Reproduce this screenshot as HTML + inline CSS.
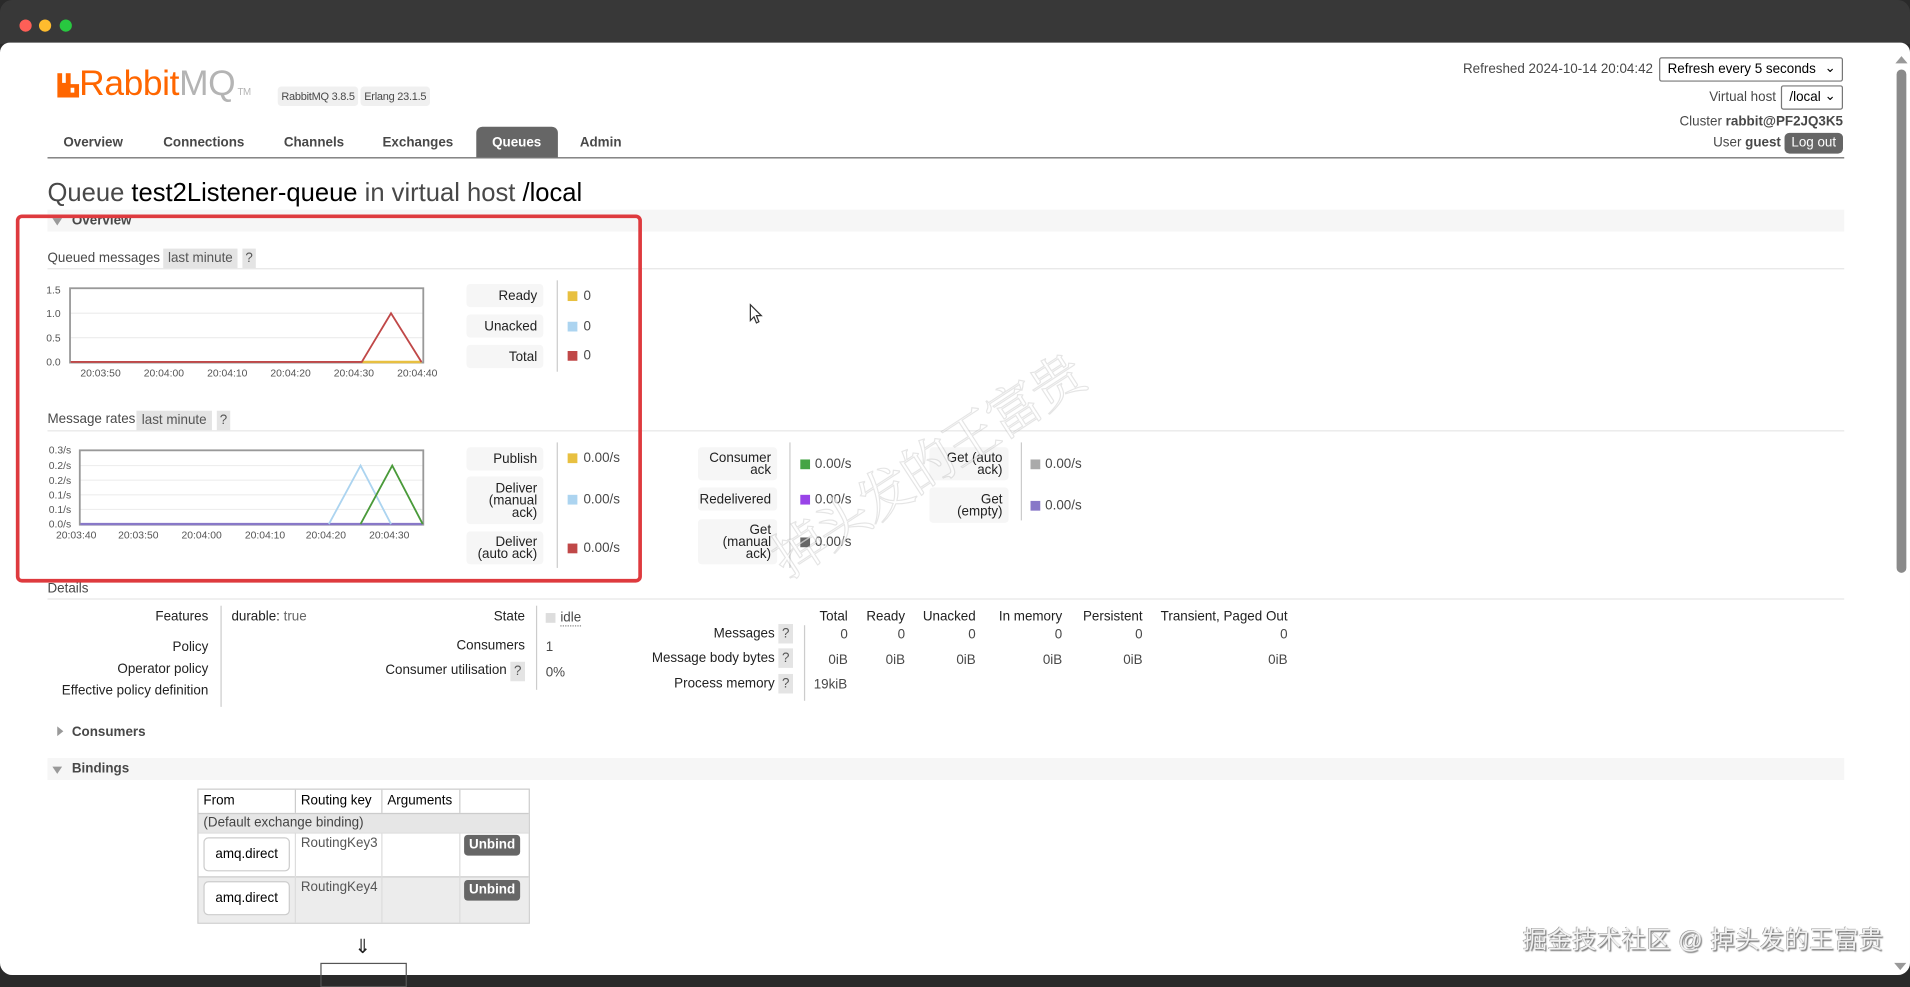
<!DOCTYPE html>
<html><head><meta charset="utf-8"><style>
*{margin:0;padding:0;box-sizing:border-box}
html,body{width:1910px;height:975px;overflow:hidden;background:#2a2a2a}
#w{position:absolute;left:0;top:0;width:1568px;height:800px;transform:scale(1.21811,1.21875);transform-origin:0 0;font-family:"Liberation Sans","Noto Sans CJK SC",sans-serif;font-size:11px;color:#484848}
.a{position:absolute;white-space:nowrap}
.r{text-align:right}
.b{font-weight:bold}
.lb{position:absolute;background:#f6f6f6;border-radius:3px;text-align:right;padding-right:5px;color:#222;line-height:10px;display:flex;flex-direction:column;justify-content:center;align-items:flex-end}
.sw{position:absolute;width:8px;height:8px}
.vl{position:absolute;width:1px;background:#ccc}
.hl{position:absolute;height:1px;background:#e6e6e6}
.q{position:absolute;background:#e4e4e4;color:#555;text-align:center;line-height:16px;height:16px}
.ax{position:absolute;font-size:8.5px;color:#555;white-space:nowrap}
</style></head><body><div id="w">
<div class="a" style="left:0;top:0;width:1568px;height:36px;background:#383838;border-radius:10px 10px 0 0"></div>
<div class="a" style="left:16px;top:16px;width:10px;height:10px;border-radius:50%;background:#fe5f57"></div>
<div class="a" style="left:32px;top:16px;width:10px;height:10px;border-radius:50%;background:#febc2e"></div>
<div class="a" style="left:49px;top:16px;width:10px;height:10px;border-radius:50%;background:#28c840"></div>
<div class="a" style="left:0;top:35px;width:1568px;height:765px;background:#fff;border-radius:8px 8px 10px 10px"></div>

<svg class="a" style="left:47px;top:60px" width="18" height="20" viewBox="0 0 18 20"><path d="M0 0h4v8h3V0h4v9h7v11H0z M11 12v4h3v-4z" fill="#f60" fill-rule="evenodd"/></svg>
<div class="a" style="left:65px;top:53px;font-size:29px;color:#f60;letter-spacing:-0.3px">Rabbit<span style="color:#b4b4b4">MQ</span><span style="font-size:8px;color:#b4b4b4"> TM</span></div>
<div class="a" style="left:228px;top:71px;height:16px;line-height:16px;padding:0 3px;background:#f0f0f0;border-radius:3px;font-size:9px;letter-spacing:-0.2px">RabbitMQ 3.8.5</div>
<div class="a" style="left:296px;top:71px;height:16px;line-height:16px;padding:0 3px;background:#f0f0f0;border-radius:3px;font-size:9px;letter-spacing:-0.2px">Erlang 23.1.5</div>

<div class="a b" style="left:52px;top:111px">Overview</div>
<div class="a b" style="left:134px;top:111px">Connections</div>
<div class="a b" style="left:233px;top:111px">Channels</div>
<div class="a b" style="left:314px;top:111px">Exchanges</div>
<div class="a" style="left:391px;top:104px;width:67px;height:25px;background:#666;border-radius:5px 5px 0 0"></div>
<div class="a b" style="left:404px;top:111px;color:#fff">Queues</div>
<div class="a b" style="left:476px;top:111px">Admin</div>
<div class="a" style="left:39px;top:129px;width:1475px;height:1px;background:#666"></div>

<div class="a r" style="right:211px;top:51px">Refreshed 2024-10-14 20:04:42</div>
<div class="a" style="left:1362px;top:47px;width:151px;height:20px;border:1px solid #777;border-radius:2px;color:#000;padding:3px 0 0 6px">Refresh every 5 seconds<span style="position:absolute;right:5px;top:1px">&#8964;</span></div>
<div class="a r" style="right:110px;top:74px">Virtual host</div>
<div class="a" style="left:1462px;top:70px;width:51px;height:20px;border:1px solid #777;border-radius:2px;color:#000;padding:3px 0 0 6px">/local<span style="position:absolute;right:5px;top:1px">&#8964;</span></div>
<div class="a r" style="right:55px;top:94px">Cluster <b>rabbit@PF2JQ3K5</b></div>
<div class="a r" style="right:106px;top:111px">User <b>guest</b></div>
<div class="a" style="left:1465px;top:109px;width:48px;height:17px;background:#666;color:#fff;border-radius:4px;text-align:center;line-height:17px">Log out</div>

<div class="a" style="left:1556px;top:46px;border:5px solid transparent;border-bottom:6px solid #999;border-top:0"></div>
<div class="a" style="left:1557px;top:57px;width:8px;height:413px;background:#8a8a8a;border-radius:4px"></div>

<div class="a" style="left:39px;top:147px;font-size:21px;color:#484848">Queue <span style="color:#000">test2Listener-queue</span> in virtual host <span style="color:#000">/local</span></div>

<div class="a" style="left:39px;top:172px;width:1475px;height:18px;background:#f6f6f6"></div>
<div class="a" style="left:43px;top:179px;border:4px solid transparent;border-top:6px solid #999;border-bottom:0"></div>
<div class="a b" style="left:59px;top:175px">Overview</div>

<div class="a" style="left:39px;top:206px">Queued messages</div>
<div class="q" style="left:134px;top:204px;width:61px">last minute</div>
<div class="q" style="left:199px;top:204px;width:11px">?</div>
<div class="hl" style="left:39px;top:220px;width:1475px"></div>

<svg class="a" style="left:0;top:225px" width="380" height="95">
<g stroke="#eee" stroke-width="1"><line x1="57" y1="32" x2="348" y2="32"/><line x1="57" y1="52" x2="348" y2="52"/></g>
<rect x="57.5" y="11.5" width="290" height="61" fill="none" stroke="#999" stroke-width="1.5"/>
<polyline points="297,72 346,72" stroke="#e8c040" stroke-width="2" fill="none"/>
<polyline points="58,72 297,72 321,32 346,72" stroke="#c04848" stroke-width="1.5" fill="none"/>
</svg>
<div class="ax" style="left:38px;top:233px">1.5</div><div class="ax" style="left:38px;top:252px">1.0</div><div class="ax" style="left:38px;top:272px">0.5</div><div class="ax" style="left:38px;top:292px">0.0</div>
<div class="ax" style="left:66px;top:301px">20:03:50</div><div class="ax" style="left:118px;top:301px">20:04:00</div><div class="ax" style="left:170px;top:301px">20:04:10</div><div class="ax" style="left:222px;top:301px">20:04:20</div><div class="ax" style="left:274px;top:301px">20:04:30</div><div class="ax" style="left:326px;top:301px">20:04:40</div>

<div class="lb" style="left:383px;top:233px;width:63px;height:19px">Ready</div>
<div class="lb" style="left:383px;top:258px;width:63px;height:19px">Unacked</div>
<div class="lb" style="left:383px;top:283px;width:63px;height:19px">Total</div>
<div class="vl" style="left:457px;top:230px;height:75px"></div>
<div class="sw" style="left:466px;top:239px;background:#e8c040"></div><div class="a" style="left:479px;top:237px">0</div>
<div class="sw" style="left:466px;top:264px;background:#acd4f0"></div><div class="a" style="left:479px;top:262px">0</div>
<div class="sw" style="left:466px;top:288px;background:#c04848"></div><div class="a" style="left:479px;top:286px">0</div>

<div class="a" style="left:39px;top:338px">Message rates</div>
<div class="q" style="left:112px;top:337px;width:62px">last minute</div>
<div class="q" style="left:178px;top:337px;width:11px">?</div>
<div class="hl" style="left:39px;top:353px;width:1475px"></div>

<svg class="a" style="left:0;top:360px" width="380" height="80">
<g stroke="#eee"><line x1="65" y1="22" x2="348" y2="22"/><line x1="65" y1="34" x2="348" y2="34"/><line x1="65" y1="46" x2="348" y2="46"/><line x1="65" y1="58" x2="348" y2="58"/></g>
<rect x="65.5" y="9.5" width="282" height="61" fill="none" stroke="#999" stroke-width="1.5"/>
<polyline points="66,70 347,70" stroke="#8878c8" stroke-width="2" fill="none"/>
<polyline points="270,70 296,22 321,70" stroke="#acd4f0" stroke-width="1.5" fill="none"/>
<polyline points="296,70 322,22 347,70" stroke="#4a9a3a" stroke-width="1.5" fill="none"/>
</svg>
<div class="ax" style="left:40px;top:364px">0.3/s</div><div class="ax" style="left:40px;top:377px">0.2/s</div><div class="ax" style="left:40px;top:389px">0.2/s</div><div class="ax" style="left:40px;top:401px">0.1/s</div><div class="ax" style="left:40px;top:413px">0.1/s</div><div class="ax" style="left:40px;top:425px">0.0/s</div>
<div class="ax" style="left:46px;top:434px">20:03:40</div><div class="ax" style="left:97px;top:434px">20:03:50</div><div class="ax" style="left:149px;top:434px">20:04:00</div><div class="ax" style="left:201px;top:434px">20:04:10</div><div class="ax" style="left:251px;top:434px">20:04:20</div><div class="ax" style="left:303px;top:434px">20:04:30</div>

<div class="lb" style="left:383px;top:367px;width:63px;height:19px">Publish</div>
<div class="lb" style="left:383px;top:391px;width:63px;height:39px">Deliver<br>(manual<br>ack)</div>
<div class="lb" style="left:383px;top:436px;width:63px;height:27px">Deliver<br>(auto ack)</div>
<div class="vl" style="left:457px;top:363px;height:103px"></div>
<div class="sw" style="left:466px;top:372px;background:#e8c040"></div><div class="a" style="left:479px;top:370px">0.00/s</div>
<div class="sw" style="left:466px;top:406px;background:#acd4f0"></div><div class="a" style="left:479px;top:404px">0.00/s</div>
<div class="sw" style="left:466px;top:446px;background:#c04848"></div><div class="a" style="left:479px;top:444px">0.00/s</div>

<div class="lb" style="left:573px;top:367px;width:65px;height:27px">Consumer<br>ack</div>
<div class="lb" style="left:573px;top:400px;width:65px;height:19px">Redelivered</div>
<div class="lb" style="left:573px;top:426px;width:65px;height:37px">Get<br>(manual<br>ack)</div>
<div class="vl" style="left:648px;top:363px;height:103px"></div>
<div class="sw" style="left:657px;top:377px;background:#44a444"></div><div class="a" style="left:669px;top:375px">0.00/s</div>
<div class="sw" style="left:657px;top:406px;background:#9944e8"></div><div class="a" style="left:669px;top:404px">0.00/s</div>
<div class="sw" style="left:657px;top:441px;background:#666"></div><div class="a" style="left:669px;top:439px">0.00/s</div>

<div class="lb" style="left:763px;top:367px;width:65px;height:27px">Get (auto<br>ack)</div>
<div class="lb" style="left:763px;top:400px;width:65px;height:29px">Get<br>(empty)</div>
<div class="vl" style="left:838px;top:363px;height:64px"></div>
<div class="sw" style="left:846px;top:377px;background:#aaa"></div><div class="a" style="left:858px;top:375px">0.00/s</div>
<div class="sw" style="left:846px;top:411px;background:#8878c8"></div><div class="a" style="left:858px;top:409px">0.00/s</div>

<div class="a" style="left:648px;top:478px;transform:rotate(-33deg);transform-origin:0 100%;font-size:44px;line-height:44px;margin-top:-44px;color:rgba(255,255,255,0.6);-webkit-text-stroke:1px rgba(0,0,0,0.1);font-family:'Noto Serif CJK SC',serif;letter-spacing:-2px">掉头发的王富贵</div>

<svg class="a" style="left:615px;top:249px" width="12" height="18"><path d="M1 1v13l3-3 2 5 2-1-2-5h4z" fill="#fff" stroke="#333" stroke-width="1"/></svg>

<div class="a" style="left:13px;top:176px;width:514px;height:302px;border:3px solid #de3a3e;border-radius:5px"></div>

<div class="a" style="left:39px;top:477px">Details</div>
<div class="hl" style="left:39px;top:491px;width:1475px"></div>

<div class="a r" style="right:1397px;top:500px;color:#222">Features</div>
<div class="a r" style="right:1397px;top:525px;color:#222">Policy</div>
<div class="a r" style="right:1397px;top:543px;color:#222">Operator policy</div>
<div class="a r" style="right:1397px;top:561px;color:#222">Effective policy definition</div>
<div class="vl" style="left:181px;top:497px;height:83px"></div>
<div class="a" style="left:190px;top:500px;color:#222">durable: <span style="color:#666">true</span></div>

<div class="a r" style="right:1137px;top:500px;color:#222">State</div>
<div class="a r" style="right:1137px;top:524px;color:#222">Consumers</div>
<div class="a r" style="right:1152px;top:544px;color:#222">Consumer utilisation</div>
<div class="q" style="left:419px;top:543px;width:12px">?</div>
<div class="vl" style="left:440px;top:497px;height:69px"></div>
<div class="sw" style="left:448px;top:503px;background:#ddd"></div>
<div class="a" style="left:460px;top:501px;border-bottom:1px dotted #888">idle</div>
<div class="a" style="left:448px;top:525px">1</div>
<div class="a" style="left:448px;top:546px">0%</div>

<div class="a r" style="right:872px;top:500px;color:#222">Total</div>
<div class="a r" style="right:825px;top:500px;color:#222">Ready</div>
<div class="a r" style="right:767px;top:500px;color:#222">Unacked</div>
<div class="a r" style="right:696px;top:500px;color:#222">In memory</div>
<div class="a r" style="right:630px;top:500px;color:#222">Persistent</div>
<div class="a r" style="right:511px;top:500px;color:#222">Transient, Paged Out</div>
<div class="a r" style="right:932px;top:514px;color:#222">Messages</div><div class="q" style="left:639px;top:512px;width:12px">?</div>
<div class="a r" style="right:932px;top:534px;color:#222">Message body bytes</div><div class="q" style="left:639px;top:532px;width:12px">?</div>
<div class="a r" style="right:932px;top:555px;color:#222">Process memory</div><div class="q" style="left:639px;top:553px;width:12px">?</div>
<div class="vl" style="left:660px;top:513px;height:62px"></div>
<div class="a r" style="right:872px;top:515px">0</div><div class="a r" style="right:825px;top:515px">0</div><div class="a r" style="right:767px;top:515px">0</div><div class="a r" style="right:696px;top:515px">0</div><div class="a r" style="right:630px;top:515px">0</div><div class="a r" style="right:511px;top:515px">0</div>
<div class="a r" style="right:872px;top:536px">0iB</div><div class="a r" style="right:825px;top:536px">0iB</div><div class="a r" style="right:767px;top:536px">0iB</div><div class="a r" style="right:696px;top:536px">0iB</div><div class="a r" style="right:630px;top:536px">0iB</div><div class="a r" style="right:511px;top:536px">0iB</div>
<div class="a" style="left:668px;top:556px">19kiB</div>

<div class="a" style="left:47px;top:596px;border:4px solid transparent;border-left:5px solid #999;border-right:0"></div>
<div class="a b" style="left:59px;top:595px">Consumers</div>
<div class="a" style="left:39px;top:622px;width:1475px;height:18px;background:#f6f6f6"></div>
<div class="a" style="left:43px;top:629px;border:4px solid transparent;border-top:6px solid #999;border-bottom:0"></div>
<div class="a b" style="left:59px;top:625px">Bindings</div>

<div class="a" style="left:162px;top:647px;width:273px;height:111px;border:1px solid #ccc;background:#fff"></div>
<div class="a" style="left:163px;top:667px;width:271px;height:16px;background:#e6e6e6"></div>
<div class="a" style="left:163px;top:719px;width:271px;height:38px;background:#ececec"></div>
<div class="hl" style="left:163px;top:667px;width:271px;background:#ccc"></div>
<div class="hl" style="left:163px;top:683px;width:271px;background:#ddd"></div>
<div class="hl" style="left:163px;top:719px;width:271px;background:#ccc"></div>
<div class="vl" style="left:242px;top:648px;height:19px"></div><div class="vl" style="left:313px;top:648px;height:19px"></div><div class="vl" style="left:377px;top:648px;height:19px"></div>
<div class="vl" style="left:242px;top:683px;height:74px;background:#ddd"></div><div class="vl" style="left:313px;top:683px;height:74px;background:#ddd"></div><div class="vl" style="left:377px;top:683px;height:74px;background:#ddd"></div>
<div class="a" style="left:167px;top:651px;color:#000">From</div>
<div class="a" style="left:247px;top:651px;color:#000">Routing key</div>
<div class="a" style="left:318px;top:651px;color:#000">Arguments</div>
<div class="a" style="left:167px;top:669px;color:#444">(Default exchange binding)</div>
<div class="a" style="left:167px;top:687px;width:71px;height:28px;background:#fff;border:1px solid #ccc;border-radius:4px;text-align:center;line-height:26px;color:#000">amq.direct</div>
<div class="a" style="left:167px;top:723px;width:71px;height:28px;background:#fff;border:1px solid #ccc;border-radius:4px;text-align:center;line-height:26px;color:#000">amq.direct</div>
<div class="a" style="left:247px;top:686px;color:#555">RoutingKey3</div>
<div class="a" style="left:247px;top:722px;color:#555">RoutingKey4</div>
<div class="a b" style="left:381px;top:685px;width:46px;height:17px;background:#666;color:#fff;border-radius:3px;text-align:center;line-height:17px">Unbind</div>
<div class="a b" style="left:381px;top:722px;width:46px;height:17px;background:#666;color:#fff;border-radius:3px;text-align:center;line-height:17px">Unbind</div>
<div class="a" style="left:291px;top:767px;font-size:16px;color:#222">&#8659;</div>
<div class="a" style="left:263px;top:790px;width:71px;height:20px;border:1px solid #555"></div>

<div class="a" style="left:1250px;top:755px;font-size:20px;color:#f2f2f2;text-shadow:1px 1px 1px #777,-0.5px -0.5px 0 #999;letter-spacing:0.3px">掘金技术社区 @ 掉头发的王富贵</div>
<div class="a" style="left:1555px;top:790px;border:5px solid transparent;border-top:6px solid #999;border-bottom:0"></div>
</div></body></html>
